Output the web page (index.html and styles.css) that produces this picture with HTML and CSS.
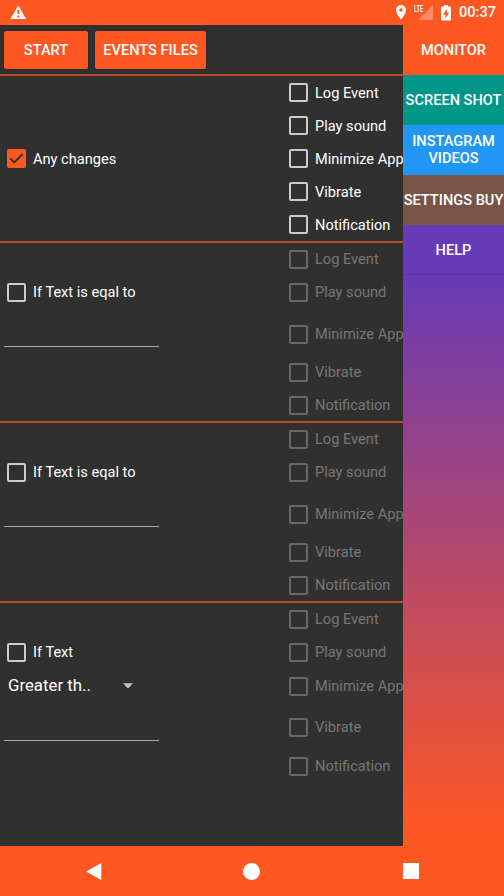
FILE: index.html
```html
<!DOCTYPE html>
<html lang="en">
<head>
<meta charset="utf-8">
<title>Monitor</title>
<link rel="stylesheet" href="styles.css">
</head>
<body>
<header class="status">
  <svg class="warn" width="17" height="15" viewBox="0 0 17 15"><path fill="#fff" d="M8.300 0.500L16.200 14H0.400Z"/><path fill="#ff5722" d="M7.300 5h2v4h-2zM7.300 10.500h2v2h-2z"/></svg>
  <svg class="pin" width="10" height="15" viewBox="0 0 10 15"><path fill="#fff" fill-rule="evenodd" d="M5 0a5 5 0 0 0-5 5c0 3.700 5 9.500 5 9.500s5-5.800 5-9.500a5 5 0 0 0-5-5zM5 3.200a1.800 1.800 0 1 1 0 3.600a1.800 1.800 0 0 1 0-3.600z"/></svg>
  <div class="signal"><span class="lte">LTE</span><svg width="15" height="15" viewBox="0 0 15 15"><path fill="#ff8a65" d="M15 0v15H0z"/></svg></div>
  <svg class="battery" width="10" height="16" viewBox="0 0 10 16"><path fill="#fff" d="M3 0h4v1.600h2q1 0 1 1v12q0 1-1 1H1q-1 0-1-1v-12q0-1 1-1h2z"/><path fill="#ff5722" d="M5.900 3.700L2 9.400h2.300v4L8.200 7.800H5.900z"/></svg>
  <span class="clock">00:37</span>
</header>
<div class="screen">
  <main class="main">
    <div class="toolbar"><button class="btn start">START</button><button class="btn files">EVENTS FILES</button></div>
    <section class="rule any">
      <div class="condition"><label class="check"><span class="box checked"><svg width="19" height="19" viewBox="0 0 19 19"><path d="M3.200 9.400L7.300 13.400L15.800 5" fill="none" stroke="#303030" stroke-width="1.900"/></svg></span><span class="label">Any changes</span></label></div>
      <div class="actions"><label class="check"><span class="box"></span><span class="label">Log Event</span></label><label class="check"><span class="box"></span><span class="label">Play sound</span></label><label class="check"><span class="box"></span><span class="label">Minimize App</span></label><label class="check"><span class="box"></span><span class="label">Vibrate</span></label><label class="check"><span class="box"></span><span class="label">Notification</span></label></div>
    </section>
    <section class="rule equal">
      <div class="condition"><label class="check"><span class="box"></span>If Text is eqal to</label><div class="field"></div></div>
      <div class="actions off"><label class="check"><span class="box"></span>Log Event</label><label class="check"><span class="box"></span>Play sound</label><label class="check"><span class="box"></span>Minimize App</label><label class="check"><span class="box"></span>Vibrate</label><label class="check"><span class="box"></span>Notification</label></div>
    </section>
    <section class="rule equal">
      <div class="condition"><label class="check"><span class="box"></span>If Text is eqal to</label><div class="field"></div></div>
      <div class="actions off"><label class="check"><span class="box"></span>Log Event</label><label class="check"><span class="box"></span>Play sound</label><label class="check"><span class="box"></span>Minimize App</label><label class="check"><span class="box"></span>Vibrate</label><label class="check"><span class="box"></span>Notification</label></div>
    </section>
    <section class="rule compare">
      <div class="condition"><label class="check"><span class="box"></span>If Text</label><div class="spinner"><span>Greater th..</span><svg width="10" height="6" viewBox="0 0 10 6"><path fill="#c4c4c4" d="M0 .3h10L5 5.500z"/></svg></div><div class="field"></div></div>
      <div class="actions off"><label class="check"><span class="box"></span>Log Event</label><label class="check"><span class="box"></span>Play sound</label><label class="check"><span class="box"></span>Minimize App</label><label class="check"><span class="box"></span>Vibrate</label><label class="check"><span class="box"></span>Notification</label></div>
    </section>
  </main>
  <nav class="side">
    <a class="tab monitor">MONITOR</a>
    <a class="tab shot">SCREEN SHOT</a>
    <a class="tab videos">INSTAGRAM<br>VIDEOS</a>
    <a class="tab buy">SETTINGS BUY</a>
    <a class="tab help">HELP</a>
    <div class="fade"></div>
  </nav>
</div>
<footer class="navbar">
  <svg class="back" width="16" height="17" viewBox="0 0 16 17"><path fill="#fff" d="M15.300 0v17L0 8.500z"/></svg>
  <svg class="home" width="17" height="17" viewBox="0 0 17 17"><circle cx="8.500" cy="8.500" r="8.500" fill="#fff"/></svg>
  <span class="recent"></span>
</footer>
</body>
</html>
```

FILE: styles.css
```css
* { box-sizing: border-box; }
body {
  margin: 0;
  width: 504px;
  height: 896px;
  overflow: hidden;
  display: flex;
  flex-direction: column;
  background: #ff5722;
  color: #fff;
  font: 14.6px/17px Roboto, sans-serif;
}
svg { display: block; flex: none; }

.status { height: 25px; flex: none; display: flex; align-items: center; padding-left: 10px; background: #ff5722; }
.pin { margin-left: 369px; }
.signal { display: flex; margin-left: 8px; width: 27px; }
.signal svg { margin-left: -7px; }
.lte { width: 12px; font: 700 9.5px/8px Roboto, sans-serif; transform: scaleX(.6); transform-origin: 0 0; white-space: nowrap; margin-right: -1px; }
.clock { margin-left: 8px; font-weight: 500; }

.screen { display: flex; height: 821px; flex: none; }
.main { width: 403px; background: #303030; overflow: hidden; }
.toolbar { display: flex; gap: 7px; height: 51px; padding: 6px 4px 0; border-bottom: 2px solid #b84b2b; }
.btn {
  height: 38px;
  padding: 0;
  border: 0;
  border-radius: 2px;
  background: #ff5722;
  color: #fff;
  font: 500 14.6px/17px Roboto, sans-serif;
  box-shadow: 0 0 1px 1px #282c2e;
}
.start { width: 84px; }
.files { width: 111px; }

.rule { display: flex; justify-content: space-between; border-bottom: 2px solid #b84b2b; }
.any { height: 167px; }
.equal { height: 180px; }
.compare { height: 243px; border-bottom: 0; }
.condition { width: 160px; padding-left: 7px; }
.actions { width: 114px; overflow: hidden; }
.check { display: flex; align-items: center; height: 33px; white-space: nowrap; }
.box { width: 19px; height: 19px; flex: none; margin-right: 7px; border: 2px solid #cbcbcb; border-radius: 2px; }
.checked { border: 0; background: #ff5722; }
.label { padding-top: 2px; }
.off { color: #777; }
.off .box { border-color: #686868; }

.any .condition { padding-top: 66px; }
.equal .condition, .compare .condition { padding-top: 33px; }
.equal .check:nth-child(3) { margin-top: 9px; }
.equal .check:nth-child(4) { margin-top: 5px; }
.compare .check:nth-child(3) { margin-top: 1px; }
.compare .check:nth-child(4) { margin-top: 8px; }
.compare .check:nth-child(5) { margin-top: 6px; }

.field { width: 155px; height: 1px; margin: 37px 0 0 -3px; background: #a9a9a9; }
.spinner { display: flex; align-items: center; justify-content: space-between; width: 126px; height: 33px; padding-left: 1px; font-size: 16.8px; }
.compare .field { margin-top: 38px; }

.side { width: 101px; display: flex; flex-direction: column; }
.tab { display: flex; align-items: center; justify-content: center; height: 50px; flex: none; text-align: center; white-space: nowrap; font-weight: 500; }
.monitor { background: #ff5722; }
.shot { background: #009688; }
.videos { background: #2196f3; }
.buy { background: #795548; }
.help { background: #673ab7; box-shadow: inset 0 -1px #5d34a5; }
.fade { flex: 1; background: linear-gradient(#673ab7, #ff5722 98%); }

.navbar { height: 50px; flex: none; display: flex; align-items: center; padding-left: 86px; background: #ff5722; }
.home { margin-left: 141px; }
.recent { width: 16px; height: 16px; margin-left: 143px; background: #fff; }
```
